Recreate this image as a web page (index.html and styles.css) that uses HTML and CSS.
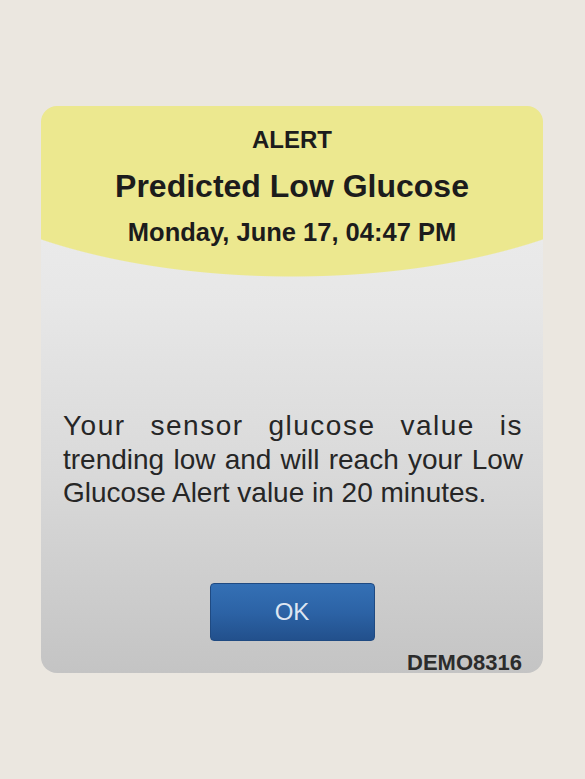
FILE: index.html
```html
<!DOCTYPE html>
<html lang="en">
<head>
<meta charset="utf-8">
<title>Alert</title>
<link rel="stylesheet" href="styles.css">
</head>
<body>
<main class="screen">
  <section class="card">
    <header class="card-head">
      <div class="kicker">ALERT</div>
      <h1 class="title">Predicted Low Glucose</h1>
      <div class="stamp">Monday, June 17, 04:47 PM</div>
    </header>
    <p class="message">Your sensor glucose value is trending low and will reach your Low Glucose Alert value in 20 minutes.</p>
    <div class="actions">
      <button class="ok-btn" type="button">OK</button>
    </div>
    <div class="demo-id">DEMO8316</div>
  </section>
</main>
</body>
</html>
```
FILE: styles.css
```css
html, body {
  margin: 0;
  padding: 0;
}
body {
  background: #ebe7e0;
  font-family: "Liberation Sans", Arial, sans-serif;
  width: 585px;
  height: 779px;
  overflow: hidden;
}
.screen {
  padding: 106px 42px 0 41px;
}
.card {
  width: 502px;
  height: 567px;
  box-sizing: border-box;
  border-radius: 16px;
  overflow: hidden;
  display: flex;
  flex-direction: column;
  background:
    radial-gradient(400px 167px at 50% 4px, #ece88f 99.4%, rgba(236,232,143,0) 100%),
    linear-gradient(#f0f0f0 0%, #e7e7e7 35%, #d9d9d9 65%, #c4c4c4 100%);
}
.card-head {
  display: flex;
  flex-direction: column;
  align-items: center;
  padding-top: 22px;
  color: #1c1c1c;
}
.kicker {
  font-size: 24px;
  font-weight: 700;
  line-height: 24px;
}
.title {
  margin: 16px 0 0;
  font-size: 32px;
  font-weight: 700;
  line-height: 36px;
}
.stamp {
  font-size: 25.5px;
  font-weight: 700;
  line-height: 28px;
  margin-top: 14px;
}
.message {
  margin: 163px 20px 0 22px;
  font-size: 28px;
  line-height: 33.5px;
  text-align: justify;
  color: #262626;
}
.message::first-line {
  letter-spacing: 1.5px;
}
.actions {
  display: flex;
  justify-content: center;
  margin-top: 73px;
}
.ok-btn {
  width: 165px;
  height: 58px;
  border: 1px solid #1f4a82;
  border-radius: 4px;
  background: linear-gradient(#3470b5 0%, #2c63a6 50%, #22508c 100%);
  color: #dde6f2;
  font-family: "Liberation Sans", Arial, sans-serif;
  font-size: 24px;
  padding: 0;
}
.demo-id {
  align-self: flex-end;
  margin: 12px 21px 0 0;
  font-size: 22px;
  font-weight: 700;
  color: #2c2c2c;
  line-height: 20px;
}
```
